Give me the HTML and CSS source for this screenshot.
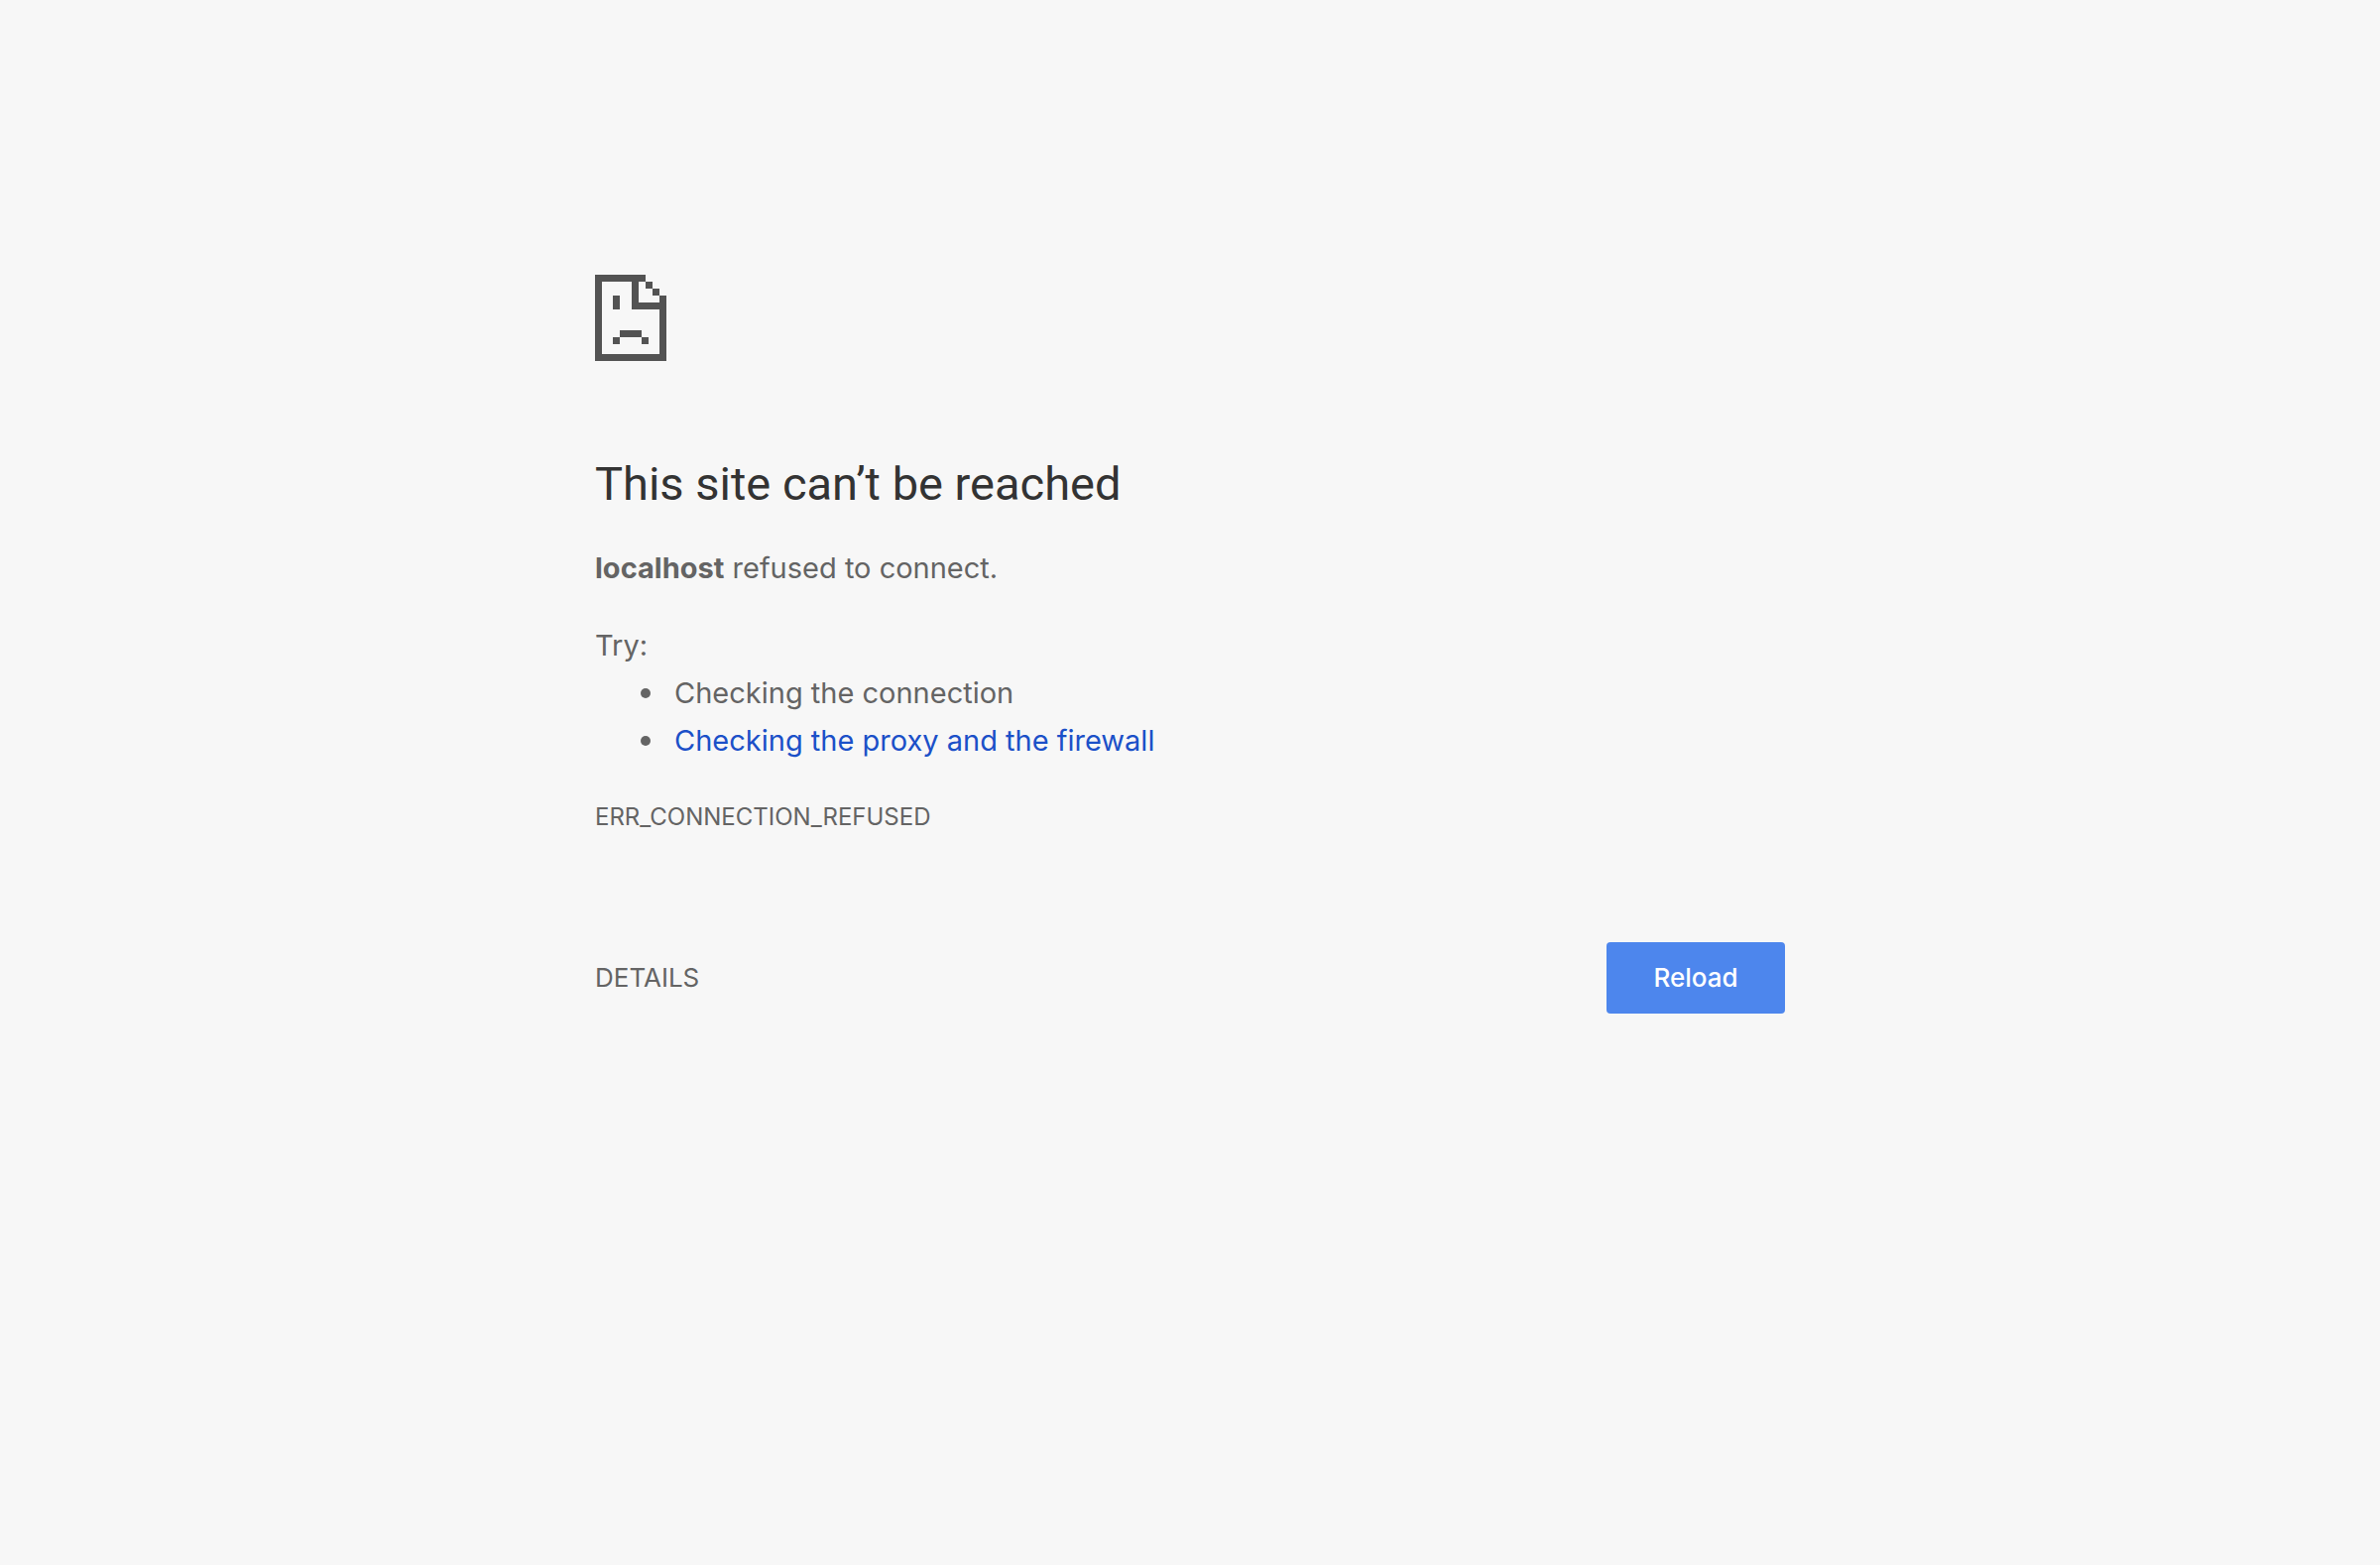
FILE: index.html
```html
<!DOCTYPE html>
<html lang="en">
<head>
<meta charset="utf-8">
<meta name="viewport" content="width=device-width, initial-scale=1">
<title>localhost</title>
<link rel="stylesheet" href="styles.css">
</head>
<body>
<main class="page">
  <svg class="icon" viewBox="0 0 72 87" shape-rendering="crispEdges" aria-hidden="true">
    <path fill="#535353" fill-rule="evenodd" d="M0 0H51V7H58V14H65V21H72V87H0ZM7 7V80H65V35H37V7ZM44 7V28H65V21H58V14H51V7ZM18 21H25V35H18ZM25 56H47V63H25ZM18 63H25V70H18ZM47 63H54V70H47Z"/>
  </svg>
  <h1 class="title">This site can’t be reached</h1>
  <p class="summary"><strong>localhost</strong> refused to connect.</p>
  <div class="suggestions">
    <p class="lead">Try:</p>
    <ul class="list">
      <li class="item">Checking the connection</li>
      <li class="item"><a class="link" href="#proxy">Checking the proxy and the firewall</a></li>
    </ul>
  </div>
  <p class="code">ERR_CONNECTION_REFUSED</p>
  <div class="actions">
    <button class="details" type="button">DETAILS</button>
    <button class="reload" type="button">Reload</button>
  </div>
</main>
</body>
</html>
```
FILE: styles.css
```css
body {
  margin: 0;
  background: #f7f7f7;
  color: #646464;
  font: 29px/48px Inter, "Liberation Sans", sans-serif;
}

.page {
  box-sizing: border-box;
  width: 50%;
  min-width: 600px;
  margin: 0 auto;
  padding-top: 277px;
}

.icon {
  display: block;
  width: 72px;
  height: 87px;
  margin-bottom: 93px;
}

.title {
  margin: 0 0 30px;
  color: #333;
  font-family: Roboto, "Liberation Sans", sans-serif;
  font-size: 47px;
  font-weight: 400;
  line-height: 62px;
}

.summary,
.lead,
.code {
  margin: 0;
}

.suggestions {
  margin: 30px 0;
}

.list {
  margin: 0;
  padding-left: 46px;
  list-style: none;
}

.item {
  display: flex;
  align-items: center;
  gap: 24px;
}

.item::before {
  content: "";
  width: 10px;
  height: 10px;
  border-radius: 50%;
  background: #646464;
}

.link {
  color: #1b50c8;
  text-decoration: none;
}

.code {
  font-size: 24px;
  line-height: 46px;
}

.actions {
  display: flex;
  align-items: center;
  justify-content: space-between;
  margin-top: 103px;
}

.details,
.reload {
  border: 0;
  font-family: inherit;
  font-size: 26px;
  line-height: 32px;
}

.details {
  padding: 0;
  background: none;
  color: #646464;
}

.reload {
  min-width: 180px;
  padding: 20px 40px;
  border-radius: 4px;
  background: #4d86ed;
  color: #fff;
  font-weight: 500;
}
```
